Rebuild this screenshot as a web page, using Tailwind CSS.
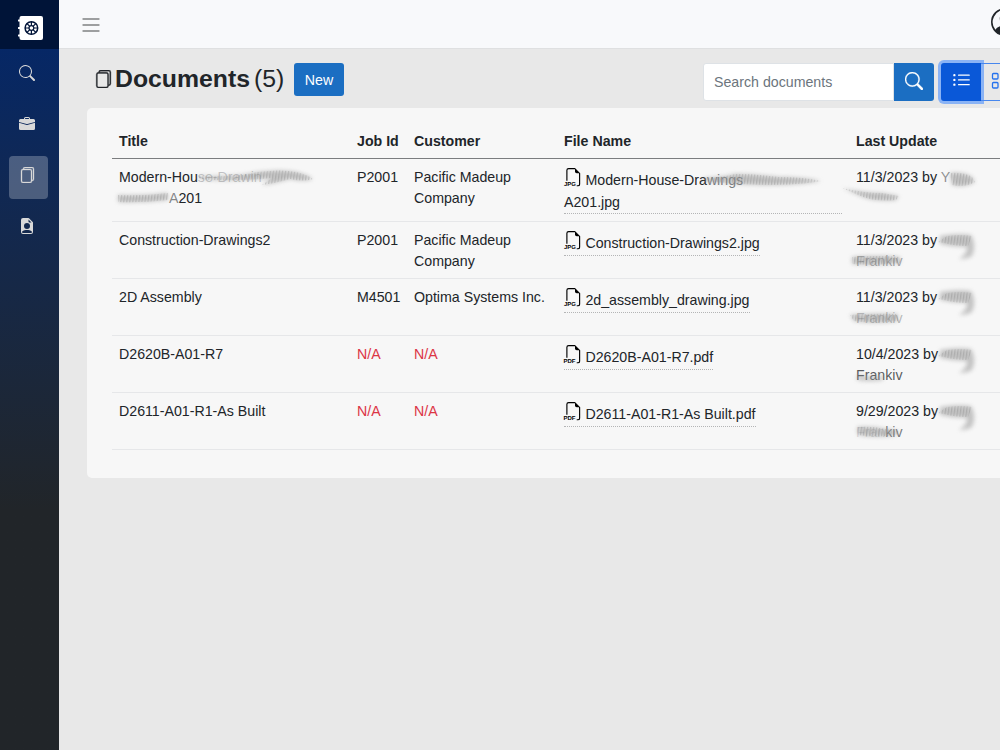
<!DOCTYPE html>
<html lang="en">
<head>
    <meta charset="UTF-8">
    <meta name="viewport" content="width=device-width, initial-scale=1.0">
    <title>Documents</title>
    <script src="https://cdn.jsdelivr.net/npm/@tailwindcss/browser@4"></script>
</head>
<body class="relative flex h-screen overflow-hidden bg-[#e8e8e8] font-['Liberation_Sans',Arial,sans-serif] text-[14.2px] leading-[21px] text-[#212529]">
    <!-- Shared icons -->
    <svg class="hidden">
        <symbol id="search" viewBox="0 0 16 16"><path d="M11.742 10.344a6.5 6.5 0 1 0-1.397 1.398h-.001c.03.04.062.078.098.115l3.85 3.85a1 1 0 0 0 1.415-1.414l-3.85-3.85a1.007 1.007 0 0 0-.115-.1zM12 6.5a5.5 5.5 0 1 1-11 0 5.5 5.5 0 0 1 11 0z"/></symbol>
        <symbol id="files" viewBox="0 0 16 16"><path d="M13 0H6a2 2 0 0 0-2 2 2 2 0 0 0-2 2v10a2 2 0 0 0 2 2h7a2 2 0 0 0 2-2 2 2 0 0 0 2-2V2a2 2 0 0 0-2-2zm0 13V4a2 2 0 0 0-2-2H5a1 1 0 0 1 1-1h7a1 1 0 0 1 1 1v10a1 1 0 0 1-1 1zM3 4a1 1 0 0 1 1-1h7a1 1 0 0 1 1 1v10a1 1 0 0 1-1 1H4a1 1 0 0 1-1-1V4z"/></symbol>
        <symbol id="filetype" viewBox="0 0 16 16"><path d="M14 4.500V14a2 2 0 0 1-2 2h-1v-1h1a1 1 0 0 0 1-1V4.500h-2A1.500 1.500 0 0 1 9.500 3V1H4a1 1 0 0 0-1 1v9H2V2a2 2 0 0 1 2-2h5.500L14 4.500z"/></symbol>
    </svg>

    <aside class="flex w-[59px] shrink-0 flex-col bg-linear-to-b from-[#052767] from-5% to-[#212529] to-68%">
        <div class="flex h-[49px] items-center bg-[#001438] pt-[7px] pl-[18px]">
            <svg class="h-6 w-[26px]" viewBox="0 0 26 24">
                <path fill="#fff" d="M3.500 0h19.500a2 2 0 0 1 2 2v20a2 2 0 0 1-2 2H3.500a2 2 0 0 1-2-2v-1.500H.7a.8.8 0 0 1 0-2h.8v-5.500H.7a.8.8 0 0 1 0-2h.8V5.500H.7a.8.8 0 0 1 0-2h.8V2a2 2 0 0 1 2-2z"/>
                <g fill="none" stroke="#001438">
                    <circle cx="13.400" cy="12" r="6.300" stroke-width="1.500"/>
                    <circle cx="13.400" cy="12" r="2.400" stroke-width="1.200"/>
                    <path stroke-width="1.200" d="M13.400 5.700v4M13.400 14.300v4M7.100 12h4M15.700 12h4M8.900 7.500l2.900 2.900M15 13.600l2.900 2.900M17.900 7.500L15 10.400M11.800 13.600l-2.900 2.900"/>
                </g>
            </svg>
        </div>
        <nav class="flex flex-col gap-[9px] px-[9px] pt-[5px] fill-[#d9d9d9]">
            <a class="flex h-[42px] w-[39px] items-center justify-center pr-[3px] pb-1"><svg class="size-4"><use href="#search"/></svg></a>
            <a class="flex h-[42px] w-[39px] items-center justify-center pr-[3px] pb-1">
                <svg class="size-4" viewBox="0 0 16 16"><path d="M6.500 1A1.500 1.500 0 0 0 5 2.500V3H1.500A1.500 1.500 0 0 0 0 4.500v1.384l7.614 2.030a1.500 1.500 0 0 0 .772 0L16 5.884V4.500A1.500 1.500 0 0 0 14.500 3H11v-.5A1.500 1.500 0 0 0 9.500 1h-3zm0 1h3a.5.5 0 0 1 .5.5V3H6v-.5a.5.5 0 0 1 .5-.5z"/><path d="M0 12.500A1.500 1.500 0 0 0 1.500 14h13a1.500 1.500 0 0 0 1.500-1.500V6.850L8.129 8.947a.5.5 0 0 1-.258 0L0 6.850v5.650z"/></svg>
            </a>
            <a class="flex h-[43px] w-[39px] items-center justify-center rounded bg-white/25 pr-[3px] pb-[5px]"><svg class="size-4 stroke-[#d9d9d9] stroke-[0.3]"><use href="#files"/></svg></a>
            <a class="flex h-[42px] w-[39px] items-center justify-center pr-[3px] pb-[6px]">
                <svg class="size-4" viewBox="0 0 16 16"><path fill-rule="evenodd" d="M9.293 0H4a2 2 0 0 0-2 2v12a2 2 0 0 0 2 2h8a2 2 0 0 0 2-2V4.707A1 1 0 0 0 13.707 4L10 .293A1 1 0 0 0 9.293 0zM9.500 3.500v-2l3 3h-2a1 1 0 0 1-1-1zM11 8a3 3 0 1 1-6 0 3 3 0 0 1 6 0zm2 5.755V14a1 1 0 0 1-1 1H4a1 1 0 0 1-1-1v-.245S4 12 8 12s5 1.755 5 1.755z"/></svg>
            </a>
        </nav>
    </aside>

    <div class="min-w-0 flex-1 overflow-hidden">
        <header class="flex h-[49px] items-center border-b border-[#dfe0e1] bg-[#f8f9fb] pl-[23px]">
            <svg class="mt-px h-4 w-[18px] shrink-0" viewBox="0 0 18 16" fill="none" stroke="#7f8183" stroke-width="1.300" stroke-linecap="round"><path d="M1 2h16M1 8h16M1 14h16"/></svg>
            <svg class="-mt-[4px] ml-[891px] size-7 shrink-0" viewBox="0 0 16 16" fill="#212529"><path d="M11 6a3 3 0 1 1-6 0 3 3 0 0 1 6 0z"/><path fill-rule="evenodd" d="M0 8a8 8 0 1 1 16 0A8 8 0 0 1 0 8zm8-7a7 7 0 0 0-5.468 11.370C3.242 11.226 4.805 10 8 10s4.757 1.225 5.468 2.370A7 7 0 0 0 8 1z"/></svg>
        </header>

        <!-- Title bar -->
        <div class="flex h-[59px] w-[1001px] pl-[34px]">
            <svg class="mt-[21px] ml-px size-[18px] shrink-0 stroke-[#212529] stroke-[0.3]" fill="#212529"><use href="#files"/></svg>
            <h1 class="mt-[14px] ml-[3px] w-[179px] shrink-0 text-[24.8px] leading-8 whitespace-nowrap"><b>Documents</b><span class="ml-1">(5)</span></h1>
            <button class="mt-3.5 h-[33px] w-[50px] shrink-0 rounded-[3px] bg-[#1b6ec2] pt-0.5 text-white">New</button>
            <div class="mt-3.5 ml-[359px] flex h-[38px] shrink-0">
                <input class="w-[191px] rounded-l-[3px] border border-[#dee2e6] bg-white px-2.5 placeholder:text-[#6c757d]" placeholder="Search documents">
                <button class="flex w-10 items-center justify-center rounded-r-[3px] bg-[#1b6ec2]"><svg class="-mt-0.5 size-[18px] stroke-white stroke-[0.3]" fill="#fff"><use href="#search"/></svg></button>
            </div>
            <div class="mt-3.5 ml-[7px] flex h-[38px] shrink-0">
                <button class="flex w-10 items-center justify-center rounded-l-[3px] bg-[#0a58d8] shadow-[0_0_0_3px_#8ab3f5]">
                    <svg class="-mt-1 size-[19px]" viewBox="0 0 16 16" fill="#fff"><path fill-rule="evenodd" d="M5 11.500a.5.5 0 0 1 .5-.5h9a.5.5 0 0 1 0 1h-9a.5.5 0 0 1-.5-.5zm0-4a.5.5 0 0 1 .5-.5h9a.5.5 0 0 1 0 1h-9a.5.5 0 0 1-.5-.5zm0-4a.5.5 0 0 1 .5-.5h9a.5.5 0 0 1 0 1h-9a.5.5 0 0 1-.5-.5zm-3 1a1 1 0 1 0 0-2 1 1 0 0 0 0 2zm0 4a1 1 0 1 0 0-2 1 1 0 0 0 0 2zm0 4a1 1 0 1 0 0-2 1 1 0 0 0 0 2z"/></svg>
                </button>
                <button class="flex w-10 items-center border border-l-0 border-[#4787ee] pl-[10px]">
                    <svg class="-mt-0.5 size-[18px] shrink-0" viewBox="0 0 18 18" fill="none" stroke="#2472ee" stroke-width="1.300"><rect x="1.500" y="1.500" width="5.500" height="5.500" rx="1"/><rect x="10.500" y="1.500" width="5.500" height="5.500" rx="1"/><rect x="1.500" y="10.500" width="5.500" height="5.500" rx="1"/><rect x="10.500" y="10.500" width="5.500" height="5.500" rx="1"/></svg>
                </button>
            </div>
        </div>

        <main class="ml-7 h-[370px] rounded-l-[5px] bg-[#f7f7f7] pt-[15px] pl-[25px]">
            <table class="w-[1000px] table-fixed border-collapse text-left align-top">
                <colgroup><col class="w-[238px]"><col class="w-[57px]"><col class="w-[150px]"><col class="w-[292px]"><col></colgroup>
                <thead>
                    <tr class="h-[35px] border-b border-[#7b7d7f] align-top">
                        <th class="px-[7px] pt-[7px] leading-[22px]">Title</th>
                        <th class="pt-[7px] pl-[7px] leading-[22px] whitespace-nowrap">Job Id</th>
                        <th class="px-[7px] pt-[7px] leading-[22px]">Customer</th>
                        <th class="px-[7px] pt-[7px] leading-[22px]">File Name</th>
                        <th class="px-[7px] pt-[7px] leading-[22px]">Last Update</th>
                    </tr>
                </thead>
                <tbody class="align-top">
                    <tr class="h-[63px] border-b border-[#e6e7e9]">
                        <td class="px-[7px] pt-2">Modern-Hou<span class="text-[#212529]/25">se-Drawin</span><br><span class="inline-block w-[50px]"></span><span class="text-[#212529]/55">A</span>201</td>
                        <td class="pt-2 pl-[7px]">P2001</td>
                        <td class="px-[7px] pt-2">Pacific Madeup Company</td>
                        <td class="px-[7px] pt-[9px]"><a class="block w-[278px] border-b border-dotted border-[#b4b5b6] leading-[22.5px]"><svg class="-mr-px inline size-[18.5px] align-[-2px] overflow-visible"><use href="#filetype"/><text x="0" y="18.300" font-size="6" font-weight="700">JPG</text></svg> Modern-House-Dra<span class="text-[#212529]/60">wings</span><br>A201.jpg</a></td>
                        <td class="px-[7px] pt-2">11/3/2023 by <span class="text-[#212529]/50">Y</span></td>
                    </tr>
                    <tr class="h-[57px] border-b border-[#e6e7e9]">
                        <td class="px-[7px] pt-2">Construction-Drawings2</td>
                        <td class="pt-2 pl-[7px]">P2001</td>
                        <td class="px-[7px] pt-2">Pacific Madeup Company</td>
                        <td class="px-[7px] pt-[9px]"><a class="inline-block h-[25px] border-b border-dotted border-[#b4b5b6] leading-[22.5px]"><svg class="-mr-px inline size-[18.5px] align-[-2px] overflow-visible"><use href="#filetype"/><text x="0" y="18.300" font-size="6" font-weight="700">JPG</text></svg> Construction-Drawings2.jpg</a></td>
                        <td class="px-[7px] pt-2">11/3/2023 by<br><span class="text-[#212529]/40">Frankiv</span></td>
                    </tr>
                    <tr class="h-[57px] border-b border-[#e6e7e9]">
                        <td class="px-[7px] pt-2">2D Assembly</td>
                        <td class="pt-2 pl-[7px]">M4501</td>
                        <td class="pt-2 pl-[7px] whitespace-nowrap">Optima Systems Inc.</td>
                        <td class="px-[7px] pt-[9px]"><a class="inline-block h-[25px] border-b border-dotted border-[#b4b5b6] leading-[22.5px]"><svg class="-mr-px inline size-[18.5px] align-[-2px] overflow-visible"><use href="#filetype"/><text x="0" y="18.300" font-size="6" font-weight="700">JPG</text></svg> 2d_assembly_drawing.jpg</a></td>
                        <td class="px-[7px] pt-2">11/3/2023 by<br><span class="text-[#212529]/30">Frankiv</span></td>
                    </tr>
                    <tr class="h-[57px] border-b border-[#e6e7e9]">
                        <td class="px-[7px] pt-2">D2620B-A01-R7</td>
                        <td class="pt-2 pl-[7px] text-[#dc3545]">N/A</td>
                        <td class="px-[7px] pt-2 text-[#dc3545]">N/A</td>
                        <td class="px-[7px] pt-[9px]"><a class="inline-block h-[25px] border-b border-dotted border-[#b4b5b6] leading-[22.5px]"><svg class="-mr-px inline size-[18.5px] align-[-2px] overflow-visible"><use href="#filetype"/><text x="-.5" y="18.300" font-size="6" font-weight="700">PDF</text></svg> D2620B-A01-R7.pdf</a></td>
                        <td class="px-[7px] pt-2">10/4/2023 by<br><span class="text-[#212529]/75">Frankiv</span></td>
                    </tr>
                    <tr class="h-[57px] border-b border-[#e6e7e9]">
                        <td class="px-[7px] pt-2">D2611-A01-R1-As Built</td>
                        <td class="pt-2 pl-[7px] text-[#dc3545]">N/A</td>
                        <td class="px-[7px] pt-2 text-[#dc3545]">N/A</td>
                        <td class="px-[7px] pt-[9px]"><a class="inline-block h-[25px] border-b border-dotted border-[#b4b5b6] leading-[22.5px]"><svg class="-mr-px inline size-[18.5px] align-[-2px] overflow-visible"><use href="#filetype"/><text x="-.5" y="18.300" font-size="6" font-weight="700">PDF</text></svg> D2611-A01-R1-As Built.pdf</a></td>
                        <td class="px-[7px] pt-2">9/29/2023 by<br><span class="text-[#212529]/15">Fran</span><span class="text-[#212529]/60">kiv</span></td>
                    </tr>
                </tbody>
            </table>
        </main>
    </div>

    <!-- Smudges over private names -->
    <svg class="pointer-events-none absolute top-0 left-0 h-[750px] w-[1000px]" viewBox="0 0 1000 750">
        <defs>
            <pattern id="streaks" width="3" height="30" patternUnits="userSpaceOnUse" patternTransform="rotate(8)"><rect width="1.300" height="30" fill="#777"/></pattern>
            <filter id="soft" x="-20%" y="-80%" width="140%" height="260%"><feGaussianBlur stdDeviation="2"/></filter>
            <filter id="fine" x="-20%" y="-80%" width="140%" height="260%"><feGaussianBlur stdDeviation=".6"/></filter>
            <g id="first">
                <path d="M940 236q16-3 31-1 6 10 1 21-4 3-13 3 9-6 8-12-14 0-27-3z"/>
            </g>
            <g id="first-lines">
                <path d="M938 242l9-6q14-2 25 0l-4 10q-14 0-24-3z"/>
            </g>
            <g id="titles">
                <path d="M198 176q22 1 44-1l16-3q24-3 38 0 12 3 17 7-10 3-23 0-18 5-28 6l10-7q-42 4-72 1z"/>
                <path d="M118 195q25 1 50-2v7q-26 3-50 2z"/>
                <path d="M704 178q20-1 31-4 22 0 44 3 24 0 42 4-20 4-58 4-30-1-60-4z"/>
                <path d="M950 173q14-1 22 4l3 5q-10 6-23 3z"/>
                <path d="M842 188q22 5 40 5l17 3-3 4q-20 2-33-3z"/>
            </g>
            <g id="lasts">
                <path d="M852 257q24-2 48 0v6q-24 3-48 1z"/>
                <path d="M850 315q24-2 48-1v7q-24 3-44 0z"/>
                <path d="M857 427q16-1 28 2l14 2-3 4q-18 3-38 0z"/>
            </g>
        </defs>
        <g fill="#999" filter="url(#soft)" opacity=".55">
            <use href="#titles"/>
            <use href="#lasts"/>
            <path d="M857 375q15 3 26 1v4q-13 2-26 0z"/>
            <use href="#first"/>
            <use href="#first" y="56"/>
            <use href="#first" y="114"/>
            <use href="#first" y="171"/>
        </g>
        <g fill="url(#streaks)" filter="url(#fine)" opacity=".28">
            <use href="#titles"/>
            <use href="#lasts"/>
            <use href="#first-lines"/>
            <use href="#first-lines" y="57"/>
            <use href="#first-lines" y="114"/>
            <use href="#first-lines" y="171"/>
        </g>
    </svg>
</body>
</html>
